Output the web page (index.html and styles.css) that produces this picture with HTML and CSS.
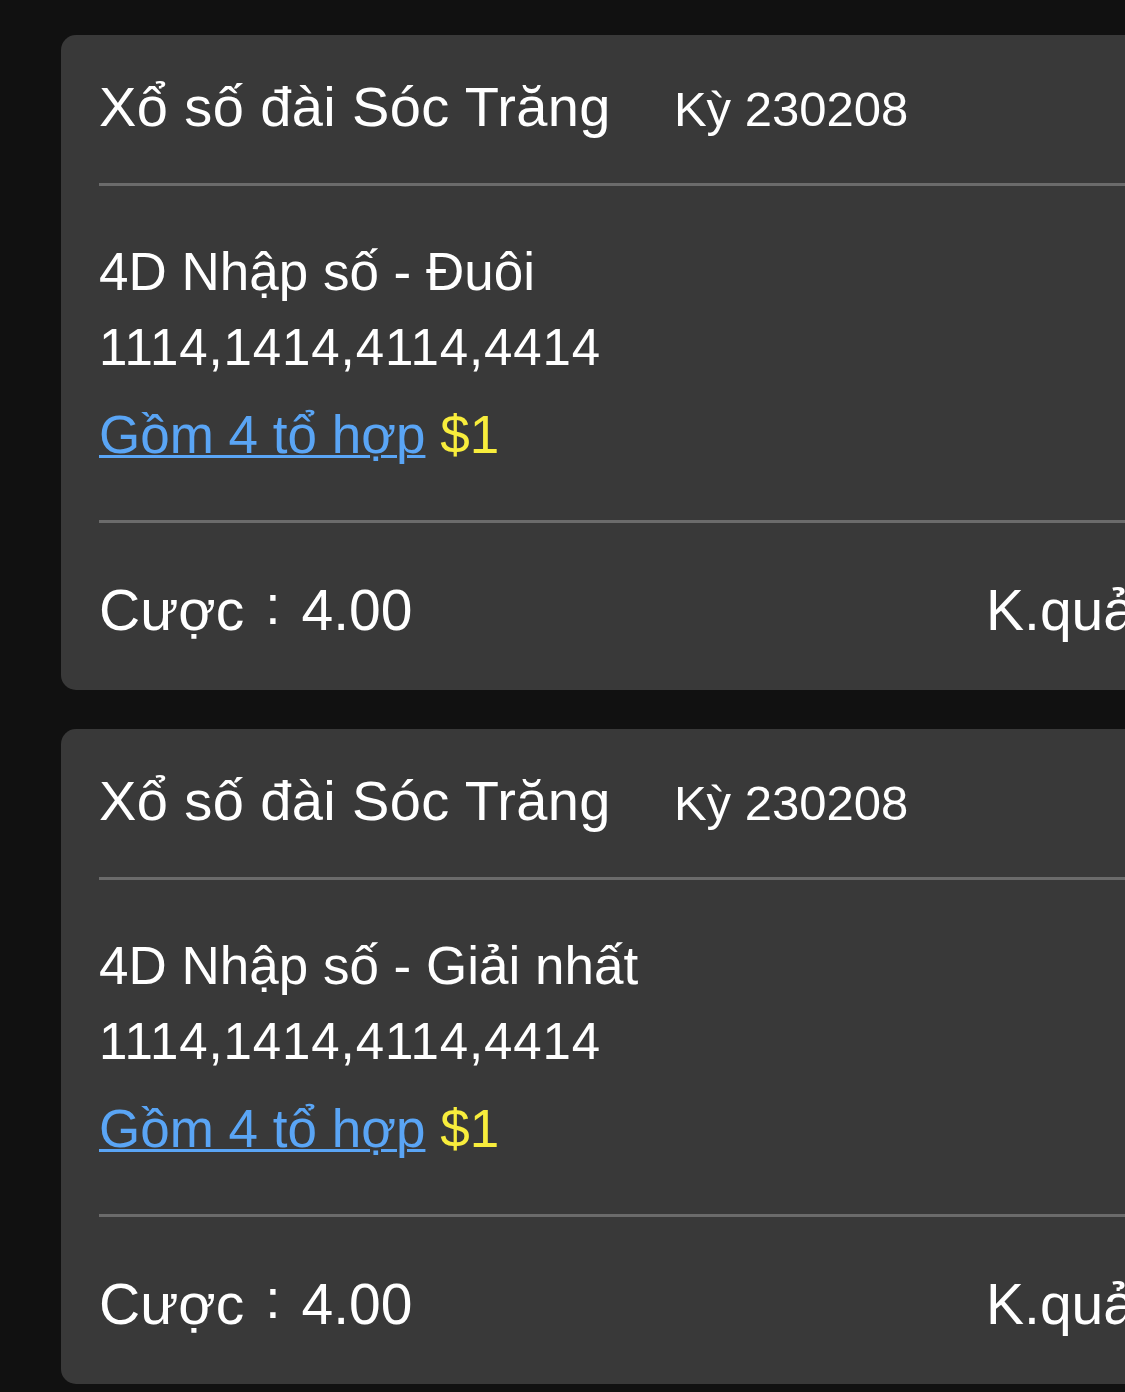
FILE: index.html
```html
<!DOCTYPE html>
<html>
  <head>
    <meta charset="utf-8">
    <title>Lịch sử cược</title>
    <link rel="stylesheet" href="styles.css">
  </head>
<body>
<div class = 'betlist'>

  <div class = 'betcard'>
    <div class = 'bethead'>
      <span class = 'lottoname'>Xổ số đài Sóc Trăng</span>
      <span class = 'period'>Kỳ 230208</span>
    </div>
    <div class = 'betbody'>
      <div class = 'playtype'>4D Nhập số - Đuôi</div>
      <div class = 'numbers'>1114,1414,4114,4414</div>
      <div class = 'combo'><a href = '#'>Gồm 4 tổ hợp</a> <span class = 'unit'>$1</span></div>
    </div>
    <div class = 'betfoot'>
      <span>Cược<span class = 'colon'>:</span>4.00</span>
      <span>K.quả</span>
    </div>
  </div>

  <div class = 'betcard'>
    <div class = 'bethead'>
      <span class = 'lottoname'>Xổ số đài Sóc Trăng</span>
      <span class = 'period'>Kỳ 230208</span>
    </div>
    <div class = 'betbody'>
      <div class = 'playtype'>4D Nhập số - Giải nhất</div>
      <div class = 'numbers'>1114,1414,4114,4414</div>
      <div class = 'combo'><a href = '#'>Gồm 4 tổ hợp</a> <span class = 'unit'>$1</span></div>
    </div>
    <div class = 'betfoot'>
      <span>Cược<span class = 'colon'>:</span>4.00</span>
      <span>K.quả</span>
    </div>
  </div>

</div>
</body>
</html>
```

FILE: styles.css
```css
:root {
  --cardColor: #393939;
  --lineColor: #6b6b6b;
}

html, body {
  margin: 0;
  background: #111111;
  overflow: hidden;
}

body {
  color: #ffffff;
  font-family: "Liberation Sans", Arial, sans-serif;
}

.betlist {
  padding: 35px 0 0 61px;
}

.betcard {
  width: 1112px;
  background: var(--cardColor);
  border-radius: 15px;
  padding: 0 38px;
  box-sizing: border-box;
  margin-bottom: 39px;
}

.bethead {
  display: flex;
  align-items: baseline;
  padding: 44px 0 46px;
  border-bottom: 3px solid var(--lineColor);
}

.lottoname {
  font-size: 56px;
  line-height: 56px;
  letter-spacing: 0.4px;
}

.period {
  font-size: 49px;
  margin-left: 63px;
}

.betbody {
  padding: 48px 0 47px;
  border-bottom: 3px solid var(--lineColor);
}

.playtype, .combo {
  font-size: 53px;
  line-height: 76px;
}

.numbers {
  font-size: 51px;
  line-height: 76px;
  letter-spacing: 0.9px;
}

.combo {
  margin-top: 11px;
}

.combo a {
  color: #5aa5f5;
  text-decoration: underline;
  text-decoration-thickness: 3px;
}

.unit {
  color: #f8ed3c;
}

.betfoot {
  display: flex;
  align-items: baseline;
  justify-content: space-between;
  font-size: 57px;
  line-height: 76px;
  height: 76px;
  padding: 49px 0 42px;
}

/* full-width colon look: centred dots, 1em wide */
.colon {
  font-size: 55px;
  line-height: 0;
  padding: 0 21px;
  vertical-align: 6px;
}
```
